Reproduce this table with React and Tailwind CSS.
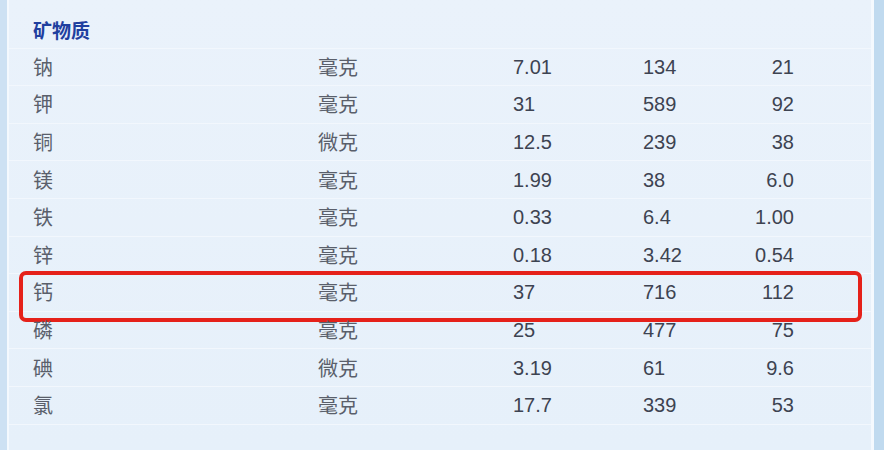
import React from "react";

const rows = [
  ["钠", "毫克", "7.01", "134", "21"],
  ["钾", "毫克", "31", "589", "92"],
  ["铜", "微克", "12.5", "239", "38"],
  ["镁", "毫克", "1.99", "38", "6.0"],
  ["铁", "毫克", "0.33", "6.4", "1.00"],
  ["锌", "毫克", "0.18", "3.42", "0.54"],
  ["钙", "毫克", "37", "716", "112"],
  ["磷", "毫克", "25", "477", "75"],
  ["碘", "微克", "3.19", "61", "9.6"],
  ["氯", "毫克", "17.7", "339", "53"],
];

const cjk = { fontFamily: '"Noto Sans CJK SC", "Noto Sans", sans-serif' };
const num = { fontFamily: '"Liberation Sans", Arial, sans-serif' };

export default function App() {
  return (
    <div className="w-[884px] h-[450px] flex bg-[#e9f2fb] overflow-hidden">
      <div className="w-[7px] shrink-0 h-full bg-[#cde1f3]" />
      <div className="w-[2px] shrink-0 h-full bg-[#f4f9fe]" />
      <div className="w-[862px] shrink-0 h-full flex flex-col pt-[11px] bg-gradient-to-b from-[#eaf2fb] to-[#e6f0fa]">
        <div className="h-[37.6px] shrink-0 flex items-center pl-[24px] border-b border-[#f2f7fd]">
          <span className="text-[19px] font-bold text-[#1f3f9f] leading-none" style={cjk}>矿物质</span>
        </div>
        {rows.map((r, i) => (
          <div
            key={i}
            className="relative h-[37.6px] shrink-0 flex items-center pl-[24px] border-b border-[#f2f7fd] text-[20px] leading-none"
          >
            <span className="w-[285px] shrink-0 text-[#5a5f6b]" style={cjk}>{r[0]}</span>
            <span className="w-[195px] shrink-0 text-[#5a5f6b]" style={cjk}>{r[1]}</span>
            <span className="w-[130px] shrink-0 text-[#3d4351]" style={num}>{r[2]}</span>
            <span className="w-[60px] shrink-0 text-[#3d4351]" style={num}>{r[3]}</span>
            <span className="w-[91px] shrink-0 text-right text-[#3d4351]" style={num}>{r[4]}</span>
            {r[0] === "钙" && (
              <div className="absolute left-[10px] top-[-3px] w-[843px] h-[51px] border-[4px] border-[#e5211a] rounded-[7px]" />
            )}
          </div>
        ))}
      </div>
      <div className="w-[3px] shrink-0 h-full bg-[#f4f9fe]" />
      <div className="w-[10px] shrink-0 h-full bg-[#c0daef]" />
    </div>
  );
}
